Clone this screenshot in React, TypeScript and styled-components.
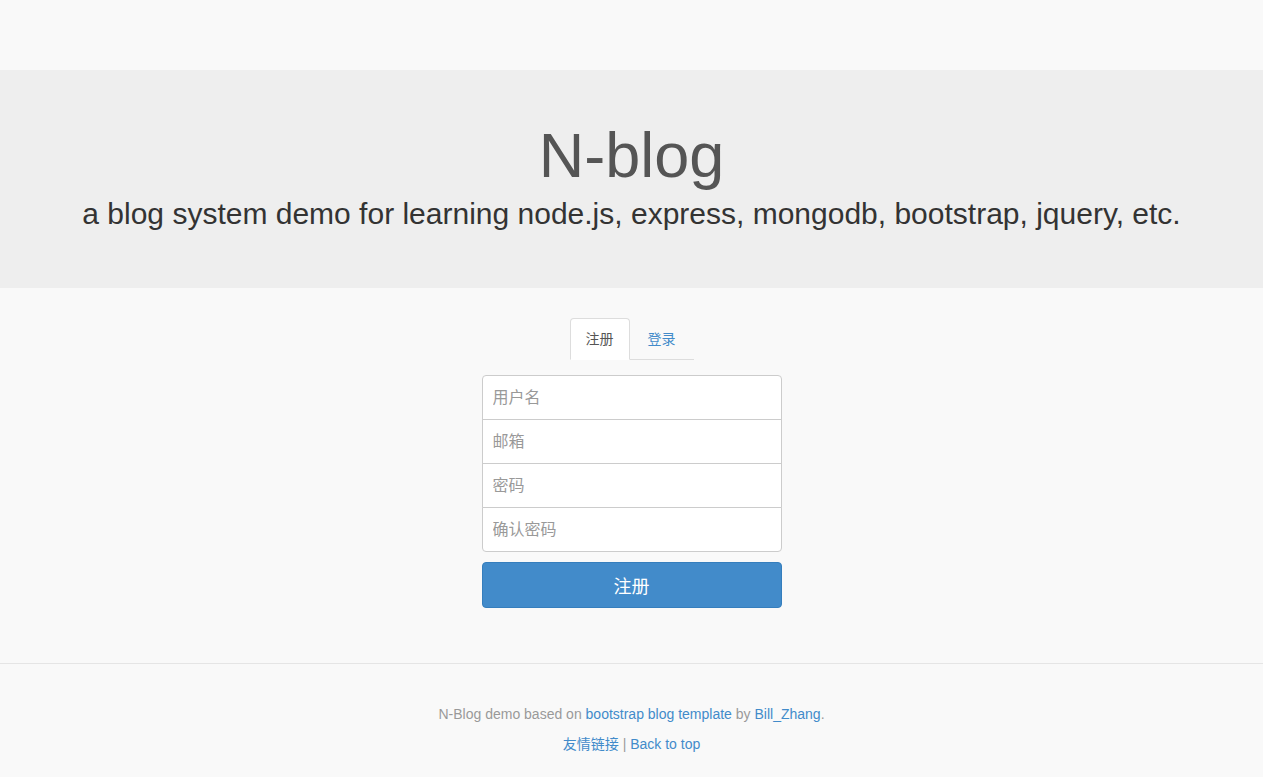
import React from "react";
import styled, { createGlobalStyle } from "styled-components";

const Global = createGlobalStyle`
  html, body { margin: 0; padding: 0; }
  body {
    background: #f9f9f9;
    font-family: "Liberation Sans", Arial, "Noto Sans CJK SC", sans-serif;
    font-size: 14px;
    line-height: 1.42857;
    color: #333;
  }
  * { box-sizing: border-box; }
`;

const TopSpace = styled.div`
  height: 70px;
`;

const Jumbotron = styled.header`
  background: #eeeeee;
  height: 218px;
  padding-top: 51px;
  text-align: center;
`;

const Title = styled.h1`
  margin: 0;
  font-size: 63px;
  font-weight: 400;
  line-height: 1.1;
  color: #555;
`;

const Lead = styled.p`
  margin: 3px 0 0;
  font-size: 30px;
  line-height: 1.4;
  color: #333;
`;

const Main = styled.main`
  display: flex;
  flex-direction: column;
  align-items: center;
  padding-top: 30px;
  padding-bottom: 55px;
`;

const Tabs = styled.ul`
  display: flex;
  list-style: none;
  margin: 0 0 15px;
  padding: 0;
  border-bottom: 1px solid #ddd;
`;

const Tab = styled.li<{ $active?: boolean }>`
  margin-bottom: -1px;
  margin-right: 2px;
  a {
    display: block;
    padding: 10px 15px;
    line-height: 20px;
    font-size: 14px;
    text-decoration: none;
    border: 1px solid ${(p) => (p.$active ? "#ddd" : "transparent")};
    border-bottom-color: transparent;
    border-radius: 4px 4px 0 0;
    background: ${(p) => (p.$active ? "#fff" : "transparent")};
    color: ${(p) => (p.$active ? "#555" : "#428bca")};
    cursor: ${(p) => (p.$active ? "default" : "pointer")};
  }
`;

const Form = styled.form`
  width: 300px;
  display: flex;
  flex-direction: column;
`;

const Field = styled.input<{ $pos: "first" | "middle" | "last" }>`
  display: block;
  width: 100%;
  height: 45px;
  padding: 10px;
  font-size: 16px;
  font-family: inherit;
  color: #555;
  background: #fff;
  border: 1px solid #ccc;
  margin-top: ${(p) => (p.$pos === "first" ? "0" : "-1px")};
  border-radius: ${(p) =>
    p.$pos === "first" ? "4px 4px 0 0" : p.$pos === "last" ? "0 0 4px 4px" : "0"};
  outline: none;
  &::placeholder {
    color: #999;
  }
`;

const Submit = styled.button`
  margin-top: 10px;
  height: 46px;
  width: 100%;
  font-family: inherit;
  font-size: 18px;
  color: #fff;
  background: #428bca;
  border: 1px solid #357ebd;
  border-radius: 4px;
  cursor: pointer;
`;

const Footer = styled.footer`
  border-top: 1px solid #e5e5e5;
  padding: 40px 0;
  text-align: center;
  color: #999;
  p {
    margin: 0 0 10px;
    line-height: 20px;
  }
  a {
    color: #428bca;
    text-decoration: none;
  }
`;

export default function App() {
  return (
    <>
      <Global />
      <TopSpace />
      <Jumbotron>
        <Title>N-blog</Title>
        <Lead>a blog system demo for learning node.js, express, mongodb, bootstrap, jquery, etc.</Lead>
      </Jumbotron>
      <Main>
        <Tabs>
          <Tab $active>
            <a>注册</a>
          </Tab>
          <Tab>
            <a href="#">登录</a>
          </Tab>
        </Tabs>
        <Form onSubmit={(e) => e.preventDefault()}>
          <Field $pos="first" type="text" placeholder="用户名" />
          <Field $pos="middle" type="email" placeholder="邮箱" />
          <Field $pos="middle" type="password" placeholder="密码" />
          <Field $pos="last" type="password" placeholder="确认密码" />
          <Submit type="submit">注册</Submit>
        </Form>
      </Main>
      <Footer>
        <p>
          N-Blog demo based on <a href="#">bootstrap blog template</a> by <a href="#">Bill_Zhang</a>.
        </p>
        <p>
          <a href="#">友情链接</a> | <a href="#">Back to top</a>
        </p>
      </Footer>
    </>
  );
}
